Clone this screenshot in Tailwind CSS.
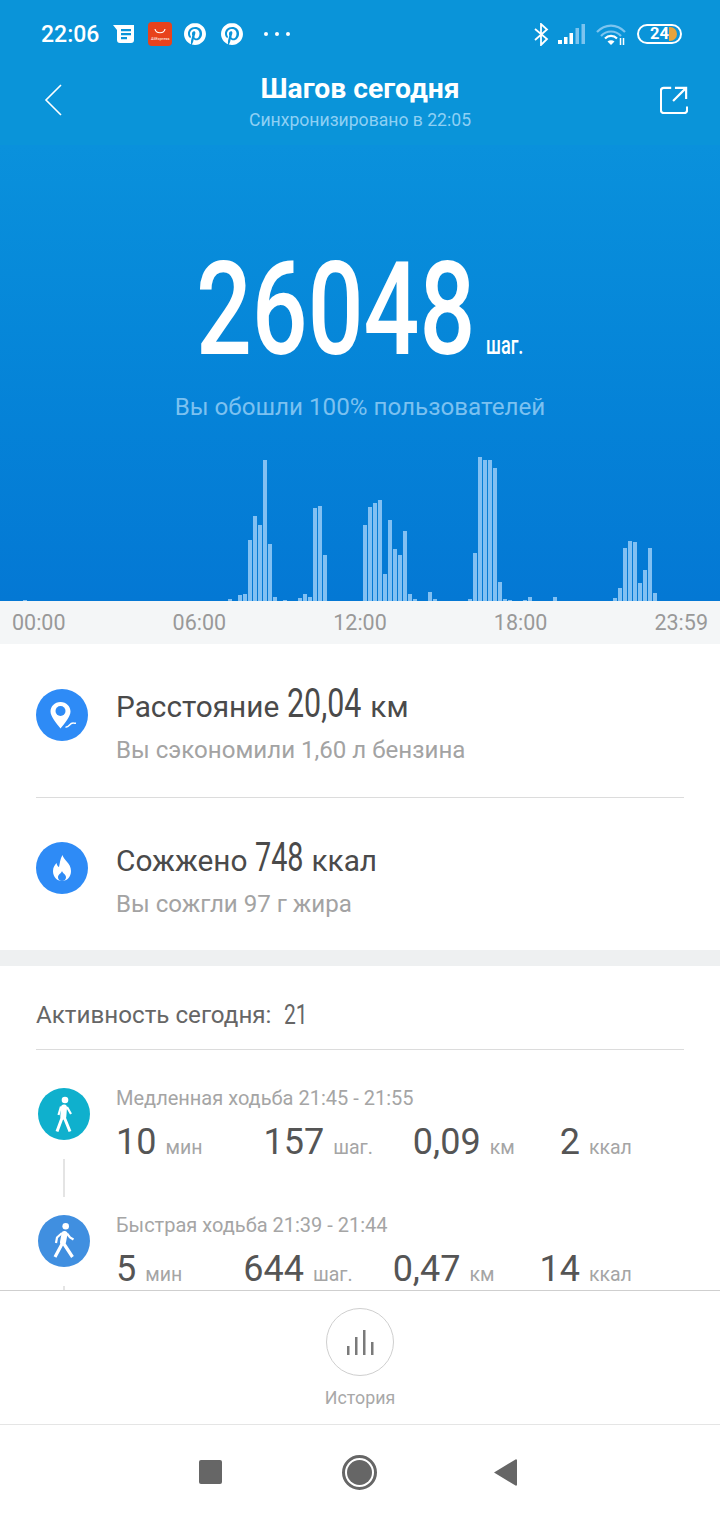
<!DOCTYPE html>
<html lang="ru">
<head>
    <meta charset="UTF-8">
    <meta name="viewport" content="width=device-width, initial-scale=1.0">
    <title>Шагов сегодня</title>
    <script src="https://cdn.jsdelivr.net/npm/@tailwindcss/browser@4"></script>
</head>
<body class="bg-white">
<div class="w-[720px] h-[1520px] flex flex-col overflow-hidden font-[family-name:Roboto,sans-serif]">

    <!-- header -->
    <div class="h-[145px] shrink-0 bg-[#0a94d9] text-white">
        <div class="h-[68px] flex items-center pl-[41px] pr-[38px]">
            <span class="text-[23px] font-medium leading-none">22:06</span>
            <svg class="ml-[14px]" width="22" height="20" viewBox="0 0 22 20" fill="white"><path d="M0 1h21v15a3 3 0 0 1-3 3H7a3 3 0 0 1-3-3V6z"/><path d="M8 5h10v2.2H8zM8 9h10v2.2H8zM8 13h6v2.2H8z" fill="#0a94d9"/></svg>
            <div class="ml-[13px] w-[24px] h-[24px] rounded-[4px] bg-[#e8421c] flex flex-col items-center pt-[6px]">
                <svg width="12" height="6" viewBox="0 0 12 6" fill="none" stroke="white" stroke-width="1.2"><path d="M1 1c1 5 9 5 10 0"/></svg>
                <span class="text-[4px] leading-none mt-[3px] text-white">AliExpress</span>
            </div>
            <svg class="ml-[12px]" width="22" height="22" viewBox="0 0 24 24" fill="white"><path d="M12.017 0C5.396 0 .029 5.367.029 11.987c0 5.079 3.158 9.417 7.618 11.162-.105-.949-.199-2.403.041-3.439.219-.937 1.406-5.957 1.406-5.957s-.359-.72-.359-1.781c0-1.663.967-2.911 2.168-2.911 1.024 0 1.518.769 1.518 1.688 0 1.029-.653 2.567-.992 3.992-.285 1.193.6 2.165 1.775 2.165 2.128 0 3.768-2.245 3.768-5.487 0-2.861-2.063-4.869-5.008-4.869-3.41 0-5.409 2.562-5.409 5.199 0 1.033.394 2.143.889 2.741.099.12.112.225.085.345-.09.375-.293 1.199-.334 1.363-.053.225-.172.271-.401.165-1.495-.69-2.433-2.878-2.433-4.646 0-3.776 2.748-7.252 7.92-7.252 4.158 0 7.392 2.967 7.392 6.923 0 4.135-2.607 7.462-6.233 7.462-1.214 0-2.354-.629-2.758-1.379l-.749 2.848c-.269 1.045-1.004 2.352-1.498 3.146 1.123.345 2.306.535 3.55.535 6.607 0 11.985-5.365 11.985-11.987C23.97 5.39 18.592.026 11.985.026L12.017 0z"/></svg>
            <svg class="ml-[15px]" width="22" height="22" viewBox="0 0 24 24" fill="white"><path d="M12.017 0C5.396 0 .029 5.367.029 11.987c0 5.079 3.158 9.417 7.618 11.162-.105-.949-.199-2.403.041-3.439.219-.937 1.406-5.957 1.406-5.957s-.359-.72-.359-1.781c0-1.663.967-2.911 2.168-2.911 1.024 0 1.518.769 1.518 1.688 0 1.029-.653 2.567-.992 3.992-.285 1.193.6 2.165 1.775 2.165 2.128 0 3.768-2.245 3.768-5.487 0-2.861-2.063-4.869-5.008-4.869-3.41 0-5.409 2.562-5.409 5.199 0 1.033.394 2.143.889 2.741.099.12.112.225.085.345-.09.375-.293 1.199-.334 1.363-.053.225-.172.271-.401.165-1.495-.69-2.433-2.878-2.433-4.646 0-3.776 2.748-7.252 7.92-7.252 4.158 0 7.392 2.967 7.392 6.923 0 4.135-2.607 7.462-6.233 7.462-1.214 0-2.354-.629-2.758-1.379l-.749 2.848c-.269 1.045-1.004 2.352-1.498 3.146 1.123.345 2.306.535 3.55.535 6.607 0 11.985-5.365 11.985-11.987C23.97 5.39 18.592.026 11.985.026L12.017 0z"/></svg>
            <div class="ml-[21px] flex gap-[7px]">
                <span class="w-[4px] h-[4px] rounded-full bg-white"></span>
                <span class="w-[4px] h-[4px] rounded-full bg-white"></span>
                <span class="w-[4px] h-[4px] rounded-full bg-white"></span>
            </div>
            <svg class="ml-auto" width="15" height="23" viewBox="0 0 15 23" fill="none" stroke="white" stroke-width="1.8"><path d="M1 6l12 10-6 6V1l6 5.5L1 17"/></svg>
            <svg class="ml-[9px]" width="27" height="20" viewBox="0 0 27 20" fill="white"><rect x="0" y="16" width="4" height="4"/><rect x="6" y="13" width="3.500" height="7"/><rect x="11.500" y="9" width="3.500" height="11"/><rect x="17.500" y="4" width="3.500" height="16" fill="#7cc4ef"/><rect x="23.500" y="0" width="3.500" height="20" fill="#7cc4ef"/></svg>
            <svg class="ml-[11px]" width="30" height="21" viewBox="0 0 30 21" fill="none"><path d="M1 8c8-8.500 20-8.500 28 0" stroke="#7cc4ef" stroke-width="2.200"/><path d="M5 12c5.500-6 14.500-6 20 0" stroke="#7cc4ef" stroke-width="2.200"/><path d="M9 14.500c3.300-3.500 8.700-3.500 12 0" stroke="white" stroke-width="2.200"/><path d="M15 21l-3.500-3.500c2-1.800 5-1.800 7 0z" fill="white"/><path d="M24.500 14v7M27.500 14v7" stroke="white" stroke-width="1.500"/></svg>
            <div class="ml-[11px] w-[45px] h-[20px] rounded-full border-2 border-white flex items-center justify-end pr-[3px]">
                <span class="text-[16.500px] font-bold leading-none">24</span>
                <span class="w-[8px] h-[14px] rounded-r-full bg-[#e9a33b]"></span>
            </div>
        </div>
        <div class="relative h-[77px] flex flex-col items-center">
            <div class="text-[28.300px] font-bold leading-[40px] mt-[1px]">Шагов сегодня</div>
            <div class="text-[17.600px] leading-[22px] text-[#8ed0f4]">Синхронизировано в 22:05</div>
            <svg class="absolute left-[44px] top-[16px]" width="18" height="32" viewBox="0 0 18 32" fill="none" stroke="white" stroke-width="1.600"><path d="M17 1L2 16l15 15"/></svg>
            <svg class="absolute right-[32px] top-[18px]" width="28" height="28" viewBox="0 0 30 30" fill="none" stroke="white" stroke-width="2.300"><path d="M12 2H4a3 3 0 0 0-3 3v21a3 3 0 0 0 3 3h22a3 3 0 0 0 3-3v-4"/><path d="M28 14V2H16M28 2L14 16"/></svg>
        </div>
    </div>

    <!-- hero -->
    <div class="h-[456px] shrink-0 bg-gradient-to-b from-[#0a91dc] to-[#0478d4] flex flex-col">
        <div class="flex items-baseline pl-[196px] mt-[85px] text-white">
            <div class="w-[290px] text-[130px] font-medium leading-[160px] whitespace-nowrap origin-left scale-x-[0.756]">26048</div>
            <div class="w-[37px] text-[26px] font-medium whitespace-nowrap origin-left scale-x-[0.7]">шаг.</div>
        </div>
        <div class="text-center text-[24.200px] leading-[30px] text-[#7cc1f0] mt-[2px]">Вы обошли 100% пользователей</div>
        <div id="bars" class="mt-auto h-[146px] flex items-end gap-px pl-[3px]"></div>
    </div>

    <!-- time axis -->
    <div class="h-[43px] shrink-0 bg-[#f4f6f7] flex items-center justify-between px-3 pt-[2px] text-[21.500px] text-[#999]">
        <span>00:00</span><span>06:00</span><span>12:00</span><span>18:00</span><span>23:59</span>
    </div>

    <!-- distance -->
    <div class="mx-[36px] h-[154px] shrink-0 flex pt-[40px] border-b border-[#dcdcdc]">
        <div class="w-[52px] h-[52px] mt-[5px] rounded-full bg-[#2e8bf6] flex items-center justify-center">
            <svg width="52" height="52" viewBox="0 0 52 52"><path d="M24.500 13c-6 0-10 4.500-10 9.500 0 5 6 12 10 17 4-5 10-12 10-17 0-5-4-9.500-10-9.500z" fill="white"/><circle cx="24.500" cy="22" r="5" fill="#2e8bf6"/><path d="M29.500 38.500c3.500 1 4-4.500 8-4 1 .1 1.800.2 2.500.3" fill="none" stroke="#2e8bf6" stroke-width="4"/><path d="M29.500 38c3.500 1 4-4.500 8-4 1 .1 1.800.2 2.500.3" fill="none" stroke="white" stroke-width="1.500"/></svg>
        </div>
        <div class="ml-[28px]">
            <div class="flex items-baseline h-[40px] leading-[40px] text-[29.800px] text-[#4a4a4a]">
                <span>Расстояние</span>
                <span class="ml-[8px] w-[74px] text-[40px] whitespace-nowrap origin-left scale-x-[0.76]">20,04</span>
                <span class="ml-[9px]">км</span>
            </div>
            <div class="mt-[11px] text-[24.100px] leading-[30px] text-[#a3a3a3]">Вы сэкономили 1,60 л бензина</div>
        </div>
    </div>

    <!-- calories -->
    <div class="mx-[36px] h-[152px] shrink-0 flex pt-[40px]">
        <div class="w-[52px] h-[52px] mt-[4px] rounded-full bg-[#2e8bf6] flex items-center justify-center">
            <svg width="52" height="52" viewBox="0 0 52 52"><path d="M26.500 13c1 5 8.500 8 8.500 16 0 6-4 10-9 10s-9-4-9-10c0-4 2-6 3.500-8 .5 2 1 3.500 2.500 4 1-4 1-8 3.500-12z" fill="white"/><path d="M26 39c-2.500 0-4-1.800-4-3.800 0-2.500 3-3.700 4-6.200 1 2.500 4 3.700 4 6.200 0 2-1.500 3.800-4 3.800z" fill="#2e8bf6"/></svg>
        </div>
        <div class="ml-[28px]">
            <div class="flex items-baseline h-[40px] leading-[40px] text-[29.800px] text-[#4a4a4a]">
                <span>Сожжено</span>
                <span class="ml-[8px] w-[48px] text-[40px] whitespace-nowrap origin-left scale-x-[0.72]">748</span>
                <span class="ml-[8px]">ккал</span>
            </div>
            <div class="mt-[11px] text-[24.100px] leading-[30px] text-[#a3a3a3]">Вы сожгли 97 г жира</div>
        </div>
    </div>

    <div class="h-[16px] shrink-0 bg-[#eef0f1]"></div>

    <!-- activity list -->
    <div class="flex-1 min-h-0 overflow-hidden">
        <div class="mx-[36px] h-[84px] flex items-center pt-[16px] border-b border-[#dcdcdc] text-[24.200px] text-[#666]">
            <span>Активность сегодня:</span>
            <span class="ml-[13px] w-[22px] text-[27px] whitespace-nowrap origin-left scale-x-[0.78]">21</span>
        </div>

        <div class="pl-[38px] pt-[35px] flex">
            <div class="w-[52px] flex flex-col items-center">
                <div class="mt-[3px] w-[52px] h-[52px] rounded-full bg-[#0fb0cd] flex items-center justify-center">
                    <svg width="52" height="52" viewBox="0 0 52 52"><circle cx="27" cy="12" r="3.300" fill="white"/><path d="M26 19.500l-.7 9" stroke="white" stroke-width="6" stroke-linecap="round"/><path d="M24 30l-5 13.500M26.500 30l5.500 13.500" stroke="white" stroke-width="3" fill="none"/><path d="M23 18.500l-2.500 8.500M29 19l4 7" stroke="white" stroke-width="2.200" fill="none"/></svg>
                </div>
                <div class="mt-[19px] w-[2px] h-[38px] bg-[#e4e4e4]"></div>
            </div>
            <div class="ml-[26px]">
                <div class="text-[20px] leading-[26px] text-[#a5a5a5]">Медленная ходьба 21:45 - 21:55</div>
                <div class="mt-[8px] flex items-baseline text-[36px] leading-[46px] text-[#555]">
                    <span>10</span><span class="ml-[9px] text-[19.500px] text-[#a5a5a5]">мин</span>
                    <span class="ml-[61px]">157</span><span class="ml-[9px] text-[19.500px] text-[#a5a5a5]">шаг.</span>
                    <span class="ml-[40px]">0,09</span><span class="ml-[9px] text-[19.500px] text-[#a5a5a5]">км</span>
                    <span class="ml-[45px]">2</span><span class="ml-[9px] text-[19.500px] text-[#a5a5a5]">ккал</span>
                </div>
            </div>
        </div>

        <div class="pl-[38px] pt-[15px] flex">
            <div class="w-[52px] flex flex-col items-center">
                <div class="mt-[3px] w-[52px] h-[52px] rounded-full bg-[#408fe0] flex items-center justify-center">
                    <svg width="52" height="52" viewBox="0 0 52 52"><circle cx="27.700" cy="11.300" r="3.300" fill="white"/><path d="M26.500 19l-1.500 8" stroke="white" stroke-width="6" stroke-linecap="round"/><path d="M24 29l-7 13M26 29l8.500 13" stroke="white" stroke-width="3.200" fill="none"/><path d="M24 18l-5 4.500-1 5.500M29 18.500l3 4 3.500 2" stroke="white" stroke-width="2.200" fill="none"/></svg>
                </div>
                <div class="mt-[19px] w-[2px] h-[38px] bg-[#e4e4e4]"></div>
            </div>
            <div class="ml-[26px]">
                <div class="text-[20px] leading-[26px] text-[#a5a5a5]">Быстрая ходьба 21:39 - 21:44</div>
                <div class="mt-[8px] flex items-baseline text-[36px] leading-[46px] text-[#555]">
                    <span>5</span><span class="ml-[9px] text-[19.500px] text-[#a5a5a5]">мин</span>
                    <span class="ml-[61px]">644</span><span class="ml-[9px] text-[19.500px] text-[#a5a5a5]">шаг.</span>
                    <span class="ml-[40px]">0,47</span><span class="ml-[9px] text-[19.500px] text-[#a5a5a5]">км</span>
                    <span class="ml-[45px]">14</span><span class="ml-[9px] text-[19.500px] text-[#a5a5a5]">ккал</span>
                </div>
            </div>
        </div>
    </div>

    <!-- history button -->
    <div class="h-[135px] shrink-0 bg-white border-y border-t-[#cfcfcf] border-b-[#e5e5e5] flex flex-col items-center pt-[17px]">
        <div class="w-[68px] h-[68px] rounded-full border border-[#cfcfcf] flex items-center justify-center">
            <svg width="27" height="25" viewBox="0 0 27 25" fill="#7a7a7a"><rect x="0" y="16" width="2.500" height="9"/><rect x="8" y="7" width="2.500" height="18"/><rect x="16" y="0" width="2.500" height="25"/><rect x="24" y="12" width="2.500" height="13"/></svg>
        </div>
        <div class="mt-[10px] text-[17.800px] leading-[24px] text-[#a8a8a8]">История</div>
    </div>

    <!-- nav bar -->
    <div class="h-[95px] shrink-0 relative bg-white flex items-center pb-[1px]">
        <div class="ml-[199px] w-[23px] h-[24px] rounded-[2px] bg-[#666]"></div>
        <div class="ml-[120px] w-[35px] h-[35px] rounded-full border-[3px] border-[#666] flex items-center justify-center">
            <div class="w-[25px] h-[25px] rounded-full bg-[#666]"></div>
        </div>
        <svg class="ml-[117px]" width="23" height="27" viewBox="0 0 23 27" fill="#666"><path d="M23 1.500v24a1 1 0 0 1-1.500 1L0 13.500 21.500.5A1 1 0 0 1 23 1.500z"/></svg>
    </div>
</div>

<script>
    // steps per 10 minute slot, slot index -> bar height in px
    const steps = {
        4: 1, 45: 2, 47: 6, 48: 7, 49: 61, 50: 85, 51: 76, 52: 141, 53: 57, 54: 4, 56: 1,
        59: 3, 60: 7, 61: 4, 62: 93, 63: 95, 64: 46,
        72: 76, 73: 94, 74: 98, 75: 101, 76: 27, 77: 81, 78: 52, 79: 46, 80: 70, 81: 7, 82: 2, 85: 9, 86: 2,
        93: 2, 94: 48, 95: 144, 96: 141, 97: 141, 98: 133, 99: 19, 100: 2, 101: 1, 104: 1, 105: 4, 110: 4,
        122: 3, 123: 13, 124: 53, 125: 60, 126: 59, 127: 18, 128: 31, 129: 53, 130: 8
    };
    const bars = document.getElementById('bars');
    for (let i = 0; i < 143; i++) {
        const bar = document.createElement('div');
        bar.className = 'w-1 shrink-0 bg-[#82c0f2]';
        bar.style.height = (steps[i] || 0) + 'px';
        bars.appendChild(bar);
    }
</script>
</body>
</html>
